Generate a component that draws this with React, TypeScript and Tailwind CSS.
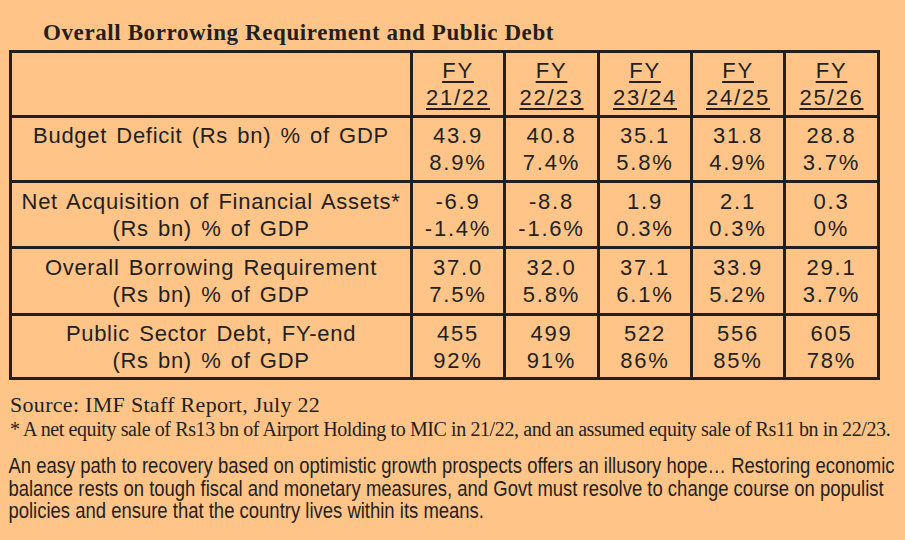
import React from 'react';

type Row = {
  label: [string, string];
  values: [string, string][];
};

const years = ['21/22', '22/23', '23/24', '24/25', '25/26'];

const rows: Row[] = [
  {
    label: ['Budget Deficit (Rs bn) % of GDP', '\u00a0'],
    values: [['43.9', '8.9%'], ['40.8', '7.4%'], ['35.1', '5.8%'], ['31.8', '4.9%'], ['28.8', '3.7%']],
  },
  {
    label: ['Net Acquisition of Financial Assets*', '(Rs bn) % of GDP'],
    values: [['-6.9', '-1.4%'], ['-8.8', '-1.6%'], ['1.9', '0.3%'], ['2.1', '0.3%'], ['0.3', '0%']],
  },
  {
    label: ['Overall Borrowing Requirement', '(Rs bn) % of GDP'],
    values: [['37.0', '7.5%'], ['32.0', '5.8%'], ['37.1', '6.1%'], ['33.9', '5.2%'], ['29.1', '3.7%']],
  },
  {
    label: ['Public Sector Debt, FY-end', '(Rs bn) % of GDP'],
    values: [['455', '92%'], ['499', '91%'], ['522', '86%'], ['556', '85%'], ['605', '78%']],
  },
];

const sans = "font-['Liberation_Sans',Arial,sans-serif]";
const serif = "font-['Liberation_Serif','Times_New_Roman',serif]";

const Cell = ({ children, label }: { children: React.ReactNode; label?: boolean }) => (
  <div
    className={
      'bg-[#ffc588] flex flex-col items-center justify-center text-center text-[22px] leading-[27px] whitespace-nowrap ' +
      (label ? 'tracking-[0.7px] [word-spacing:2.5px]' : 'tracking-[1.8px]')
    }
  >
    {children}
  </div>
);

export default function App() {
  return (
    <div className={`w-[905px] h-[540px] overflow-hidden bg-[#ffc588] text-[#231f20] ${sans}`}>
      <h1 className={`${serif} font-bold text-[23px] leading-[24px] tracking-[0.6px] pt-[21px] pl-[43px] mb-[5px]`}>
        Overall Borrowing Requirement and Public Debt
      </h1>

      <div className="ml-[9px] w-[871px] grid grid-cols-[398px_90px_91px_90px_90px_91px] grid-rows-[62px_62px_63px_64px_61px] gap-[3px] p-[3px] bg-[#231f20]">
        <Cell label>{'\u00a0'}</Cell>
        {years.map((y) => (
          <Cell key={y}>
            <span className="underline decoration-2 underline-offset-[3px]">FY</span>
            <span className="underline decoration-2 underline-offset-[3px]">{y}</span>
          </Cell>
        ))}

        {rows.map((row) => (
          <React.Fragment key={row.label[0]}>
            <Cell label>
              <span>{row.label[0]}</span>
              <span>{row.label[1]}</span>
            </Cell>
            {row.values.map(([a, b], i) => (
              <Cell key={i}>
                <span>{a}</span>
                <span>{b}</span>
              </Cell>
            ))}
          </React.Fragment>
        ))}
      </div>

      <div className={`${serif} pl-[10px] mt-[12px] whitespace-nowrap`}>
        <p className="text-[22px] leading-[25px] tracking-[0.3px]">Source: IMF Staff Report, July 22</p>
        <p className="text-[20px] leading-[25px] tracking-[-0.4px]">
          * A net equity sale of Rs13 bn of Airport Holding to MIC in 21/22, and an assumed equity sale of Rs11 bn in 22/23.
        </p>
      </div>

      <p className="text-[22px] leading-[22.5px] pl-[10px] mt-[13px] whitespace-nowrap origin-left scale-x-[0.84]">
        An easy path to recovery based on optimistic growth prospects offers an illusory hope… Restoring economic
        <br />
        balance rests on tough fiscal and monetary measures, and Govt must resolve to change course on populist
        <br />
        policies and ensure that the country lives within its means.
      </p>
    </div>
  );
}
